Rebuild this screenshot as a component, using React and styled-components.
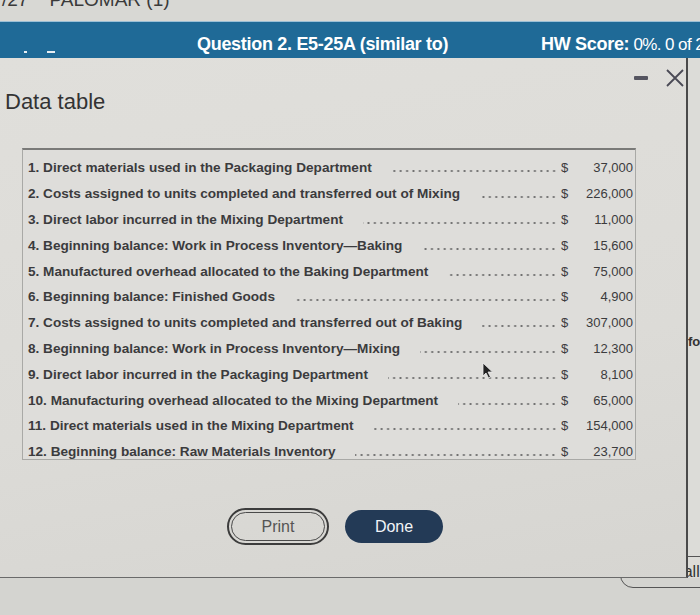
import React from "react";
import styled, { createGlobalStyle } from "styled-components";

const GlobalStyle = createGlobalStyle`
  html, body {
    margin: 0;
    padding: 0;
    background: #d4d4d0;
    font-family: "Liberation Sans", Arial, sans-serif;
  }
`;

const Page = styled.div`
  width: 700px;
  height: 615px;
  overflow: hidden;
  background: #d4d4d0;
`;

const TopStrip = styled.div`
  height: 22px;
  overflow: hidden;
  background: #d8d8d4;
  border-bottom: 1px solid #9cc0d6;
  box-sizing: border-box;
`;

const Crumb = styled.div`
  margin-top: -11px;
  padding-left: 2px;
  font-size: 19px;
  line-height: 22px;
  color: #3a3a3a;
  white-space: pre;
`;

const HeaderBar = styled.div`
  height: 36px;
  background: #1f6a97;
  display: flex;
  align-items: center;
  color: #fff;
  white-space: nowrap;
  overflow: hidden;
`;

const Marks = styled.div`
  flex-shrink: 0;
  width: 197px;
  align-self: flex-end;
  display: flex;
  align-items: center;
  gap: 20px;
  padding: 0 0 5px 24px;
  box-sizing: border-box;

  span {
    display: block;
    height: 2px;
    background: #e8eef3;
  }
`;

const Title = styled.div`
  flex-shrink: 0;
  font-size: 18px;
  font-weight: bold;
  letter-spacing: -0.3px;
  padding-top: 8px;
  width: 344px;
`;

const Score = styled.div`
  flex-shrink: 0;
  font-size: 17px;
  padding-top: 8px;
  letter-spacing: -0.6px;

  b {
    font-size: 18px;
    letter-spacing: -0.3px;
    font-weight: bold;
  }
`;

const Stage = styled.div`
  display: flex;
  height: 520px;
`;

const Dialog = styled.div`
  position: relative;
  z-index: 2;
  width: 688px;
  height: 520px;
  box-sizing: border-box;
  background: linear-gradient(170deg, #e0dfdb 0%, #dcdbd7 60%, #d6d5d1 100%);
  border-right: 2px solid #4a4a4a;
  border-bottom: 1px solid #6a6a6a;
  display: flex;
  flex-direction: column;
`;

const Controls = styled.div`
  display: flex;
  justify-content: flex-end;
  align-items: center;
  gap: 18px;
  padding: 10px 2px 0 0;
  height: 20px;
`;

const Minus = styled.span`
  display: block;
  width: 14px;
  height: 4px;
  border-radius: 1px;
  background: #555560;
`;

const Heading = styled.h2`
  margin: 1px 0 0 5px;
  font-size: 22px;
  line-height: 26px;
  font-weight: normal;
  color: #333;
`;

const TableBox = styled.div`
  position: relative;
  margin: 33px 0 0 22px;
  width: 614px;
  height: 312px;
  box-sizing: border-box;
  overflow: hidden;
  background: #deddda;
  border: 1px solid #a9a9a6;
  border-top: 2px solid #7a7a78;
  padding: 5px 2px 0 5px;
`;

const Row = styled.div`
  display: flex;
  align-items: center;
  height: 25.8px;
  color: #3b3b3d;
  white-space: nowrap;
`;

const Label = styled.span`
  font-size: 13.6px;
  font-weight: bold;
`;

const Leader = styled.span`
  flex: 1;
  height: 2px;
  margin: 7px 4px 0 20px;
  background-image: radial-gradient(circle, #707070 0.9px, transparent 1.2px);
  background-size: 6.4px 2px;
  background-position: right center;
  background-repeat: repeat-x;
`;

const Dollar = styled.span`
  width: 10px;
  font-size: 13px;
`;

const Amount = styled.span`
  width: 62px;
  text-align: right;
  font-size: 13px;
`;

const Cursor = styled.svg`
  position: absolute;
  left: 459px;
  top: 212px;
`;

const ButtonRow = styled.div`
  display: flex;
  justify-content: center;
  align-items: center;
  gap: 16px;
  margin-top: 48px;
  padding-right: 16px;
`;

const Button = styled.button`
  font-family: "Liberation Sans", Arial, sans-serif;
  font-size: 16px;
  border-radius: 20px;
  cursor: pointer;
  box-sizing: border-box;
  color: ${({ $primary }) => ($primary ? "#f2f4f7" : "#555")};
  background: ${({ $primary }) => ($primary ? "#233a56" : "transparent")};
  border: ${({ $primary }) => ($primary ? "none" : "2px solid #3c3c3c")};
  width: ${({ $primary }) => ($primary ? "98px" : "102px")};
  height: ${({ $primary }) => ($primary ? "33px" : "37px")};
  padding: ${({ $primary }) => ($primary ? "0" : "2px")};
`;

const Inner = styled.span`
  display: flex;
  align-items: center;
  justify-content: center;
  height: 100%;
  border: 1.5px solid #4a4a4a;
  border-radius: 16px;
  box-sizing: border-box;
`;

const SidePane = styled.div`
  flex: 1;
  background: #dcdcd8;
  overflow: hidden;
  padding-top: 276px;
  font-size: 13px;
  font-weight: bold;
  color: #333;
`;

const Footer = styled.div`
  margin-top: -22px;
  display: flex;
  justify-content: flex-end;
`;

const ClearButton = styled.div`
  width: 96px;
  height: 32px;
  margin-right: -16px;
  box-sizing: border-box;
  border: 1.5px solid #555;
  border-radius: 13px;
  padding: 6px 0 0 20px;
  font-size: 16px;
  color: #333;
  white-space: nowrap;
`;

const rows = [
  ["1. Direct materials used in the Packaging Department", "37,000"],
  ["2. Costs assigned to units completed and transferred out of Mixing", "226,000"],
  ["3. Direct labor incurred in the Mixing Department", "11,000"],
  ["4. Beginning balance: Work in Process Inventory\u2014Baking", "15,600"],
  ["5. Manufactured overhead allocated to the Baking Department", "75,000"],
  ["6. Beginning balance: Finished Goods", "4,900"],
  ["7. Costs assigned to units completed and transferred out of Baking", "307,000"],
  ["8. Beginning balance: Work in Process Inventory\u2014Mixing", "12,300"],
  ["9. Direct labor incurred in the Packaging Department", "8,100"],
  ["10. Manufacturing overhead allocated to the Mixing Department", "65,000"],
  ["11. Direct materials used in the Mixing Department", "154,000"],
  ["12. Beginning balance: Raw Materials Inventory", "23,700"],
];

export default function App() {
  return (
    <Page>
      <GlobalStyle />
      <TopStrip>
        <Crumb>{"/27    PALOMAR (1)"}</Crumb>
      </TopStrip>
      <HeaderBar>
        <Marks>
          <span style={{ width: 3 }} />
          <span style={{ width: 8 }} />
        </Marks>
        <Title>Question 2. E5-25A (similar to)</Title>
        <Score>
          <b>HW Score:</b> 0%. 0 of 23
        </Score>
      </HeaderBar>
      <Stage>
        <Dialog>
          <Controls>
            <Minus />
            <svg width="18" height="18" viewBox="0 0 18 18">
              <path d="M1 1 L17 17 M17 1 L1 17" stroke="#4a4a55" strokeWidth="1.8" fill="none" />
            </svg>
          </Controls>
          <Heading>Data table</Heading>
          <TableBox>
            {rows.map(([label, amount]) => (
              <Row key={label}>
                <Label>{label}</Label>
                <Leader />
                <Dollar>$</Dollar>
                <Amount>{amount}</Amount>
              </Row>
            ))}
            <Cursor width="12" height="17" viewBox="0 0 12 17">
              <path d="M1 1 L1 14 L4 11 L6.5 16 L8.5 15 L6 10 L10.5 10 Z" fill="#222" stroke="#eee" strokeWidth="0.8" />
            </Cursor>
          </TableBox>
          <ButtonRow>
            <Button>
              <Inner>Print</Inner>
            </Button>
            <Button $primary>Done</Button>
          </ButtonRow>
        </Dialog>
        <SidePane>fo</SidePane>
      </Stage>
      <Footer>
        <ClearButton>Clear all</ClearButton>
      </Footer>
    </Page>
  );
}
